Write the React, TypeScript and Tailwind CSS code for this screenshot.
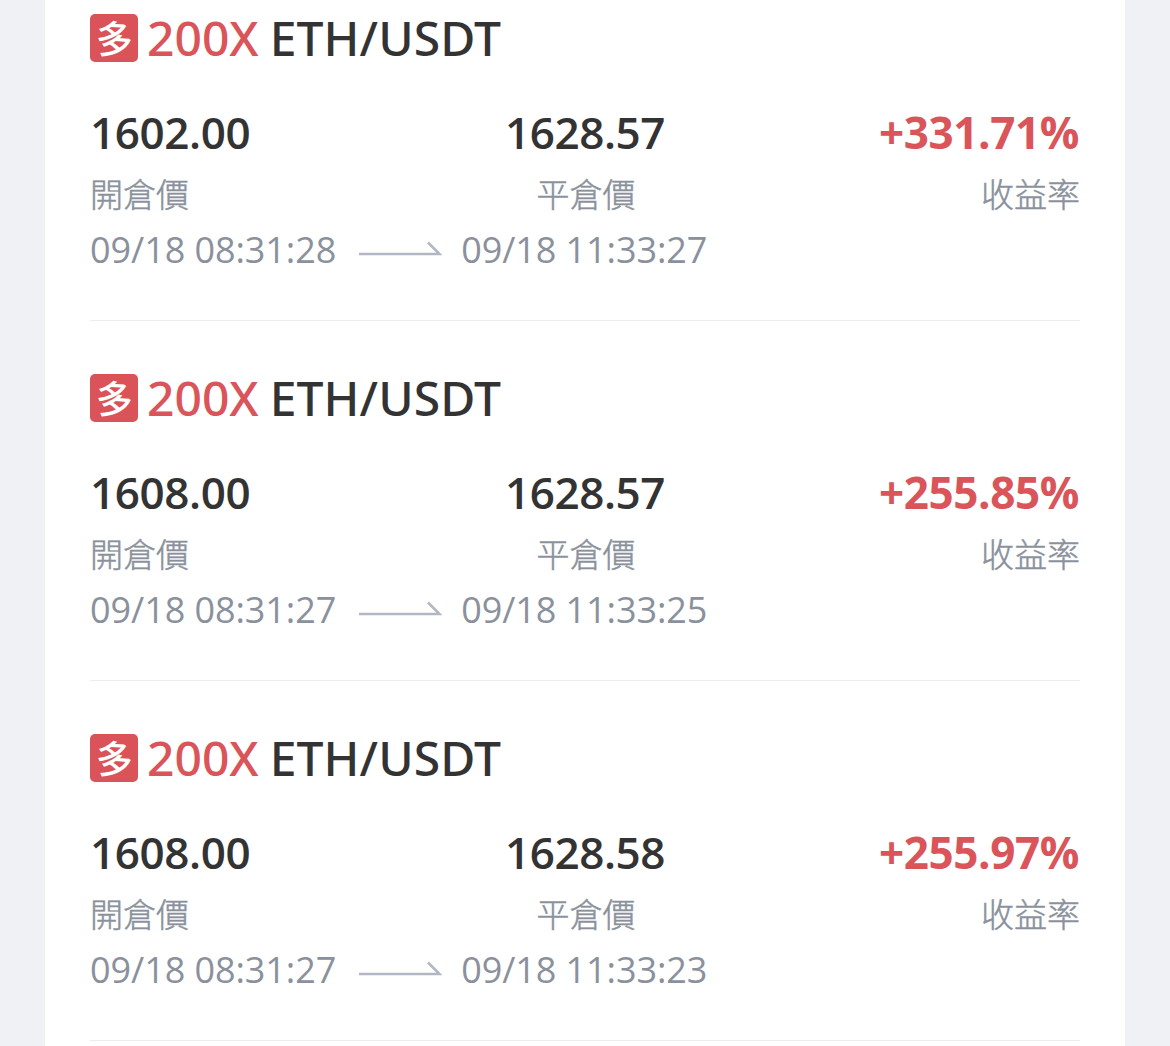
interface Trade {
  openPrice: string;
  closePrice: string;
  rate: string;
  openTime: string;
  closeTime: string;
}

const trades: Trade[] = [
  { openPrice: "1602.00", closePrice: "1628.57", rate: "+331.71%", openTime: "09/18 08:31:28", closeTime: "09/18 11:33:27" },
  { openPrice: "1608.00", closePrice: "1628.57", rate: "+255.85%", openTime: "09/18 08:31:27", closeTime: "09/18 11:33:25" },
  { openPrice: "1608.00", closePrice: "1628.58", rate: "+255.97%", openTime: "09/18 08:31:27", closeTime: "09/18 11:33:23" },
];

function Arrow() {
  return (
    <svg width="83" height="18" viewBox="0 0 83 18" fill="none" className="ml-[23px] mr-[19px] shrink-0">
      <path d="M0 13H80.5L69 1.5" stroke="#b1b8c3" strokeWidth="2.5" />
    </svg>
  );
}

function TradeItem({ trade }: { trade: Trade }) {
  return (
    <li className="h-[360px] border-b border-[#ececee] pt-[47px]">
      {/* Title */}
      <div className="flex h-[60px] items-center">
        <span className="flex h-12 w-12 items-center justify-center rounded-[5px] bg-[#d95358] text-[37px] font-medium leading-none text-white">
          <span className="-skew-x-3 skew-y-3 scale-y-105">多</span>
        </span>
        <span className="ml-[9px] font-['Noto_Sans'] text-[48px] font-medium leading-[60px] text-[#d9555a]">200X</span>
        <span className="ml-[11px] font-['Noto_Sans'] text-[48px] font-medium leading-[60px] tracking-[0.1px] text-[#333333]">ETH/USDT</span>
      </div>

      {/* Prices */}
      <div className="mt-[34px] grid grid-cols-3 text-[44px] font-semibold leading-[60px] tracking-[-0.4px] text-[#333333]">
        <span>{trade.openPrice}</span>
        <span className="text-center">{trade.closePrice}</span>
        <span className="pr-px text-right font-bold text-[#d9555a]">{trade.rate}</span>
      </div>
      <div className="mt-[9px] grid grid-cols-3 text-[33px] font-light leading-[48px] text-[#8a919c] [-webkit-text-stroke:0.5px_#8a919c]">
        <span>開倉價</span>
        <span className="pl-0.5 text-center">平倉價</span>
        <span className="text-right">收益率</span>
      </div>

      {/* Time range */}
      <div className="mt-[7px] flex h-12 items-center text-[36px] leading-[48px] tracking-[-0.08px] text-[#8a919c]">
        <span>{trade.openTime}</span>
        <Arrow />
        <span>{trade.closeTime}</span>
      </div>
    </li>
  );
}

export default function App() {
  return (
    <div className="h-[1046px] overflow-hidden bg-[#f0f1f4] px-[45px] font-['Open_Sans','Noto_Sans_CJK_TC',sans-serif]">
      <ul className="-mt-[39px] bg-white px-[45px]">
        {trades.map((trade) => (
          <TradeItem key={trade.closeTime} trade={trade} />
        ))}
        <li className="h-10" />
      </ul>
    </div>
  );
}
